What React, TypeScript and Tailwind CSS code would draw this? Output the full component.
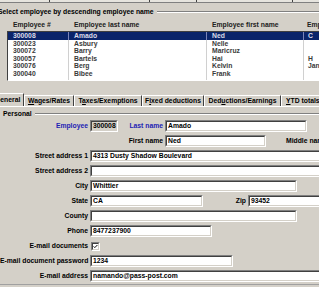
import type { ReactNode } from "react"

const rows = [
  ["300008", "Amado", "Ned", "C"],
  ["300023", "Asbury", "Nelle", ""],
  ["300072", "Barry", "Maricruz", ""],
  ["300057", "Bartels", "Hai", "H"],
  ["300076", "Berg", "Kelvin", "Jan"],
  ["300040", "Bibee", "Frank", ""],
]

function Box({ className = "", value = "", gray = false }: { className?: string; value?: string; gray?: boolean }) {
  return (
    <div className={`h-[12px] shrink-0 border border-t-[#808080] border-l-[#808080] border-r-white border-b-white ${className}`}>
      <div
        className={`h-full border border-t-[#404040] border-l-[#404040] border-r-[#d4d0c8] border-b-[#d4d0c8] pl-[1px] overflow-hidden whitespace-nowrap leading-[8px] ${
          gray ? "bg-[#d4d0c8]" : "bg-white"
        }`}
      >
        {value}
      </div>
    </div>
  )
}

function Label({ children, className = "" }: { children: ReactNode; className?: string }) {
  return <div className={`w-[88px] shrink-0 text-right whitespace-nowrap ${className}`}>{children}</div>
}

function Tab({ children, className = "" }: { children: ReactNode; className?: string }) {
  return (
    <div
      className={`h-[11px] shrink-0 border-t border-l border-t-white border-l-white border-r border-r-[#404040] leading-[10px] ${className}`}
    >
      {children}
    </div>
  )
}

export default function App() {
  return (
    <div className="w-[319px] h-[287px] overflow-hidden bg-[#d4d0c8] font-['Liberation_Sans',Arial,sans-serif] text-[6.8px] font-bold leading-[8px] text-black">
      {/* toolbar edge */}
      <div className="h-[3px] flex bg-[#e6e4de] border-b border-[#808080]">
        <div className="w-[50px] border-r border-[#404040]" />
        <div className="w-[100px] border-r border-[#404040]" />
        <div className="w-[47px] border-r border-[#404040]" />
        <div className="w-[96px] border-r border-[#404040]" />
      </div>

      {/* selection group */}
      <div className="mt-[5px] h-[8px] flex items-center">
        <span className="-ml-[2px] whitespace-nowrap">Select employee by descending employee name</span>
        <div className="ml-[3px] flex-1 border-t border-t-[#808080] border-b border-b-white" />
      </div>

      <div className="mt-[5px] h-[8px] ml-[8px] flex whitespace-nowrap text-[#202020]">
        <div className="w-[60px] shrink-0 pl-[5px]">Employee #</div>
        <div className="w-[138px] shrink-0 pl-[6px]">Employee last name</div>
        <div className="w-[97px] shrink-0 pl-[6px]">Employee first name</div>
        <div className="w-[40px] shrink-0 pl-[4px]">Employee middle</div>
      </div>

      <div className="mt-[2px] ml-[7px] h-[50px] w-[330px] bg-white border-t border-l border-[#404040] border-b border-b-white flex flex-col">
        {rows.map((r, i) => (
          <div
            key={r[0]}
            className={`h-[7.5px] shrink-0 flex leading-[7.5px] whitespace-nowrap ${
              i === 0 ? "bg-[#0a246a] text-[#dcdce8]" : "text-[#3a3a3a]"
            }`}
          >
            <div className="w-[60px] shrink-0 pl-[5px]">{r[0]}</div>
            <div className={`w-[138px] shrink-0 pl-[5px] border-l ${i === 0 ? "border-[#7a84b8]" : "border-[#d0d0d0]"}`}>{r[1]}</div>
            <div className={`w-[97px] shrink-0 pl-[5px] border-l ${i === 0 ? "border-[#7a84b8]" : "border-[#d0d0d0]"}`}>{r[2]}</div>
            <div className={`w-[40px] shrink-0 pl-[4px] border-l ${i === 0 ? "border-[#7a84b8]" : "border-[#d0d0d0]"}`}>{r[3]}</div>
          </div>
        ))}
        <div className="flex-1 flex">
          <div className="w-[60px] shrink-0" />
          <div className="w-[138px] shrink-0 border-l border-[#d0d0d0]" />
          <div className="w-[97px] shrink-0 border-l border-[#d0d0d0]" />
          <div className="w-[40px] shrink-0 border-l border-[#d0d0d0]" />
        </div>
      </div>

      {/* tabs */}
      <div className="mt-[12px] h-[13px] flex items-end whitespace-nowrap">
        <div className="-ml-[9px] w-[33px] h-[13px] shrink-0 pl-[3px] pt-[1px] border-t border-l border-white border-r border-r-[#404040] leading-[10px]">
          General
        </div>
        <Tab className="w-[50px] text-center">
          <span className="underline">W</span>ages/Rates
        </Tab>
        <Tab className="w-[68px] text-center">
          T<span className="underline">a</span>xes/Exemptions
        </Tab>
        <Tab className="w-[62px] text-center">
          F<span className="underline">i</span>xed deductions
        </Tab>
        <Tab className="w-[77px] text-center">
          Ded<span className="underline">u</span>ctions/Earnings
        </Tab>
        <Tab className="w-[50px] pl-[4px]">
          <span className="underline">Y</span>TD totals
        </Tab>
      </div>

      {/* panel */}
      <div className="border-t border-white pt-[3px]">
        <div className="h-[8px] flex items-center">
          <span className="ml-[3px] whitespace-nowrap">Personal</span>
          <div className="ml-[3px] flex-1 border-t border-t-[#808080] border-b border-b-white" />
        </div>

        <div className="mt-[2px] flex flex-col gap-[3px] whitespace-nowrap">
          <div className="h-[12px] flex items-center">
            <Label className="text-[#1e1eb4]">Employee</Label>
            <Box className="ml-[2px] w-[28px]" value="300008" gray />
            <div className="w-[45px] shrink-0 text-right text-[#1e1eb4]">Last name</div>
            <Box className="ml-[2px] w-[142px]" value="Amado" />
          </div>
          <div className="h-[12px] flex items-center">
            <div className="w-[118px] shrink-0" />
            <div className="w-[45px] shrink-0 text-right">First name</div>
            <Box className="ml-[2px] w-[101px]" value="Ned" />
            <span className="ml-[20px]">Middle name</span>
          </div>
          <div className="h-[12px] flex items-center">
            <Label>Street address 1</Label>
            <Box className="ml-[2px] w-[240px]" value="4313 Dusty Shadow Boulevard" />
          </div>
          <div className="h-[12px] flex items-center">
            <Label>Street address 2</Label>
            <Box className="ml-[2px] w-[240px]" />
          </div>
          <div className="h-[12px] flex items-center">
            <Label>City</Label>
            <Box className="ml-[2px] w-[207px]" value="Whittier" />
          </div>
          <div className="h-[12px] flex items-center">
            <Label>State</Label>
            <Box className="ml-[2px] w-[113px]" value="CA" />
            <div className="w-[43px] shrink-0 text-right">Zip</div>
            <Box className="ml-[2px] w-[80px]" value="93452" />
          </div>
          <div className="h-[12px] flex items-center">
            <Label>County</Label>
            <Box className="ml-[2px] w-[207px]" />
          </div>
          <div className="h-[12px] flex items-center">
            <Label>Phone</Label>
            <Box className="ml-[2px] w-[122px]" value="8477237900" />
          </div>
          <div className="h-[12px] flex items-center">
            <Label>E-mail documents</Label>
            <div className="ml-[3px] w-[9px] h-[9px] shrink-0 border border-t-[#808080] border-l-[#808080] border-r-white border-b-white">
              <div className="h-full border border-t-[#404040] border-l-[#404040] border-r-[#d4d0c8] border-b-[#d4d0c8] bg-white">
                <svg viewBox="0 0 5 5" className="w-full h-full block">
                  <polyline points="0.6,2.4 1.8,3.6 4.4,1" fill="none" stroke="#000" strokeWidth="1" />
                </svg>
              </div>
            </div>
          </div>
          <div className="h-[12px] flex items-center">
            <Label>E-mail document password</Label>
            <Box className="ml-[2px] w-[143px]" value="1234" />
          </div>
          <div className="h-[12px] flex items-center">
            <Label>E-mail address</Label>
            <Box className="ml-[2px] w-[240px]" value="namando@pass-post.com" />
          </div>
        </div>
        <div className="mt-[2px] h-[1px] bg-[#a0a0a0]" />
      </div>
    </div>
  )
}
